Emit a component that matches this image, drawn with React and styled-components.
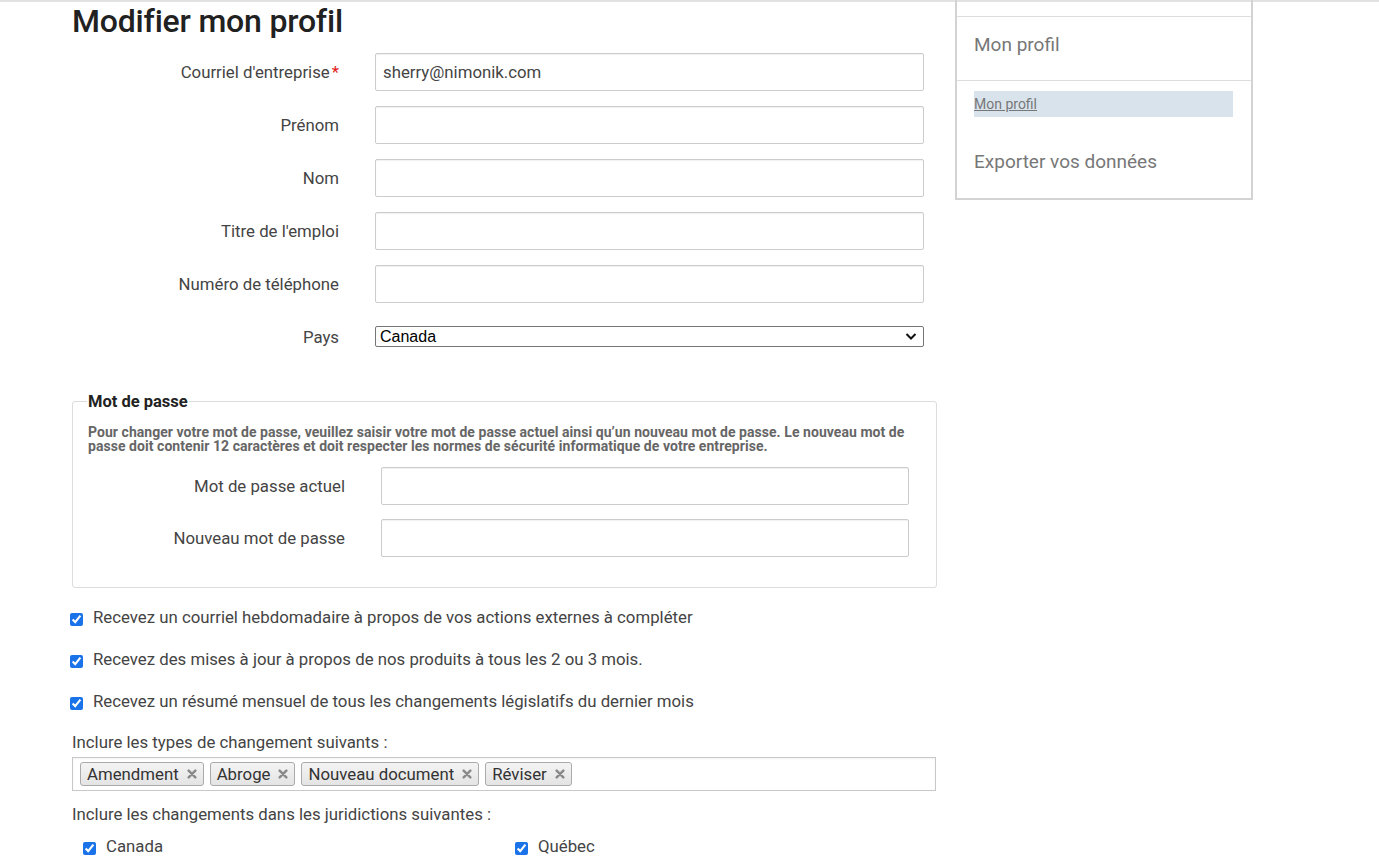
import React from 'react';
import styled, { createGlobalStyle } from 'styled-components';

const GlobalStyle = createGlobalStyle`
  body {
    margin: 0;
    background: #fff;
    font-family: Roboto, "Liberation Sans", Arial, sans-serif;
    color: #444;
  }
  * { box-sizing: border-box; }
`;

const Page = styled.div`
  display: flex;
  gap: 19px;
  padding-left: 72px;
  border-top: 2px solid #e2e2e2;
  min-height: 866px;
`;

const Main = styled.main`
  width: 864px;
`;

const Title = styled.h1`
  margin: 0 0 13px;
  font-size: 32px;
  line-height: 38px;
  font-weight: 500;
  color: #212121;
  letter-spacing: -0.2px;
`;

// rangées du formulaire
const FormGrid = styled.div`
  display: grid;
  grid-template-columns: ${(p) => p.$label}px ${(p) => p.$input}px;
  column-gap: 36px;
  row-gap: ${(p) => p.$gap || 15}px;
  align-items: center;
`;

const Label = styled.label`
  text-align: right;
  font-size: 16.8px;
  color: #444;
  margin-top: ${(p) => p.$top || 0}px;
`;

const Required = styled.span`
  color: #e21a1a;
  margin-left: 2px;
`;

const TextInput = styled.input`
  height: 38px;
  width: 100%;
  border: 1px solid #ccc;
  border-radius: 2px;
  box-shadow: inset 0 1px 1px rgba(0, 0, 0, 0.06);
  padding: 0 7px;
  font-family: Roboto, sans-serif;
  font-size: 16.8px;
  color: #444;
`;

const SelectWrap = styled.div`
  position: relative;
  margin-top: 8px;
  height: 21px;
`;

const Select = styled.select`
  appearance: none;
  height: 21px;
  width: 100%;
  font-family: Arial, "Liberation Sans", sans-serif;
  font-size: 16px;
  color: #000;
  border: 1px solid #767676;
  border-radius: 2px;
  background: #fff;
  padding: 0 0 0 4px;
`;

const Chevron = styled.svg`
  position: absolute;
  right: 7px;
  top: 6px;
  pointer-events: none;
`;

const Fieldset = styled.fieldset`
  margin: 45px 0 0;
  padding: 0 27px 30px 15px;
  border: 1px solid #dcdcdc;
  border-radius: 3px;
`;

const Legend = styled.legend`
  padding: 0 1px;
  margin-left: -1px;
  font-size: 16.5px;
  font-weight: 700;
  color: #222;
`;

const Help = styled.p`
  margin: 14px 0 14px;
  font-size: 14px;
  line-height: 14px;
  font-weight: 700;
  color: #666;
  letter-spacing: 0.05px;
`;

const CheckList = styled.div`
  display: flex;
  flex-direction: column;
  gap: 23px;
  margin-top: 20px;
`;

const CheckRow = styled.label`
  display: flex;
  align-items: center;
  gap: 10px;
  font-size: 16.8px;
  line-height: 19px;
  color: #444;
`;

const Box = styled.input.attrs({ type: 'checkbox' })`
  width: 13px;
  height: 13px;
  margin: 4px 0 0 -2px;
  accent-color: #1a73e8;
`;

const Caption = styled.div`
  margin-top: ${(p) => p.$top}px;
  font-size: 16.8px;
  line-height: 19px;
  color: #444;
`;

const TagBox = styled.div`
  display: flex;
  gap: 6px;
  margin-top: 5px;
  height: 34px;
  align-items: center;
  padding: 0 7px;
  border: 1px solid #c8c8c8;
  box-shadow: inset 0 1px 2px rgba(0, 0, 0, 0.05);
`;

const Tag = styled.span`
  display: inline-flex;
  align-items: center;
  gap: 8px;
  height: 24px;
  padding: 0 6px;
  font-size: 16.8px;
  color: #333;
  border: 1px solid #aaa;
  border-radius: 3px;
  background: linear-gradient(#f4f4f4, #e4e4e4);
`;

const JurGrid = styled.div`
  display: grid;
  grid-template-columns: 432px 432px;
  margin-top: 13px;
  padding-left: 13px;
`;

const Side = styled.aside`
  width: 298px;
  height: 200px;
  margin-top: -2px;
  border: 2px solid #d3d3d3;
  border-top: none;
  display: flex;
  flex-direction: column;
`;

const SideTop = styled.div`
  height: 17px;
  flex-shrink: 0;
  border-bottom: 1px solid #ddd;
`;

const SideHead = styled.div`
  height: 64px;
  flex-shrink: 0;
  display: flex;
  align-items: center;
  padding: 0 17px 9px;
  font-size: 19px;
  color: #777;
  border-bottom: 1px solid #ddd;
`;

const SideLinkWrap = styled.div`
  margin: 10px 18px 0 17px;
  height: 26px;
  flex-shrink: 0;
  display: flex;
  align-items: center;
  background: #d9e3ec;
`;

const SideLink = styled.a`
  font-size: 14px;
  color: #777;
  text-decoration: underline;
`;

const SideItem = styled.div`
  padding: 33px 17px 0;
  font-size: 19px;
  color: #777;
`;

const RemoveIcon = () => (
  <svg width="10" height="10" viewBox="0 0 12 12">
    <path d="M2 2 L10 10 M10 2 L2 10" stroke="#8a8a8a" strokeWidth="3" strokeLinecap="round" />
  </svg>
);

const rows = [
  ["Courriel d'entreprise", 'sherry@nimonik.com', true],
  ['Prénom', ''],
  ['Nom', ''],
  ["Titre de l'emploi", ''],
  ['Numéro de téléphone', ''],
];

const tags = ['Amendment', 'Abroge', 'Nouveau document', 'Réviser'];

export default function App() {
  return (
    <>
      <GlobalStyle />
      <Page>
        <Main>
          <Title>Modifier mon profil</Title>
          <FormGrid $label={267} $input={549}>
            {rows.map(([l, v, req]) => (
              <React.Fragment key={l}>
                <Label>
                  {l}
                  {req && <Required>*</Required>}
                </Label>
                <TextInput defaultValue={v} />
              </React.Fragment>
            ))}
            <Label $top={8}>Pays</Label>
            <SelectWrap>
              <Select defaultValue="Canada">
                <option>Canada</option>
              </Select>
              <Chevron width="12" height="9" viewBox="0 0 12 9">
                <path d="M1.5 2 L6 6.5 L10.5 2" fill="none" stroke="#111" strokeWidth="2" />
              </Chevron>
            </SelectWrap>
          </FormGrid>

          <Fieldset>
            <Legend>Mot de passe</Legend>
            <Help>
              Pour changer votre mot de passe, veuillez saisir votre mot de passe actuel ainsi qu’un nouveau mot de
              passe. Le nouveau mot de passe doit contenir 12 caractères et doit respecter les normes de sécurité
              informatique de votre entreprise.
            </Help>
            <FormGrid $label={257} $input={528} $gap={14}>
              <Label>Mot de passe actuel</Label>
              <TextInput type="password" />
              <Label>Nouveau mot de passe</Label>
              <TextInput type="password" />
            </FormGrid>
          </Fieldset>

          <CheckList>
            <CheckRow>
              <Box defaultChecked />
              Recevez un courriel hebdomadaire à propos de vos actions externes à compléter
            </CheckRow>
            <CheckRow>
              <Box defaultChecked />
              Recevez des mises à jour à propos de nos produits à tous les 2 ou 3 mois.
            </CheckRow>
            <CheckRow>
              <Box defaultChecked />
              Recevez un résumé mensuel de tous les changements législatifs du dernier mois
            </CheckRow>
          </CheckList>

          <Caption $top={22}>Inclure les types de changement suivants :</Caption>
          <TagBox>
            {tags.map((t) => (
              <Tag key={t}>
                {t}
                <RemoveIcon />
              </Tag>
            ))}
          </TagBox>

          <Caption $top={14}>Inclure les changements dans les juridictions suivantes :</Caption>
          <JurGrid>
            <CheckRow>
              <Box defaultChecked />
              Canada
            </CheckRow>
            <CheckRow>
              <Box defaultChecked />
              Québec
            </CheckRow>
          </JurGrid>
        </Main>

        <Side>
          <SideTop />
          <SideHead>Mon profil</SideHead>
          <SideLinkWrap>
            <SideLink href="#">Mon profil</SideLink>
          </SideLinkWrap>
          <SideItem>Exporter vos données</SideItem>
        </Side>
      </Page>
    </>
  );
}
